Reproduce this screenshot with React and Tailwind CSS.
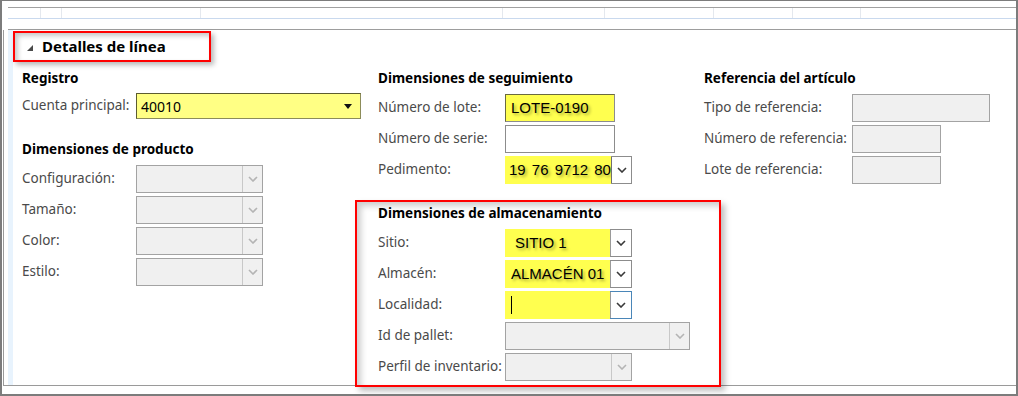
import React from "react";

const ui = "font-['Noto_Sans',sans-serif]";
const val = "font-['Liberation_Sans',Arial,sans-serif] text-[15px] text-black whitespace-nowrap [text-shadow:2px_2px_3px_rgba(0,0,0,0.35)]";

function Chevron({ dim }) {
  return (
    <svg width="10" height="6" viewBox="0 0 10 6" className="block">
      <polyline
        points="1,1 5,5 9,1"
        fill="none"
        stroke={dim ? "#b4b4b4" : "#3a3a3a"}
        strokeWidth="1.6"
      />
    </svg>
  );
}

// disabled gray combobox
function DimCombo({ w = "w-[127px]" }) {
  return (
    <div className={`${w} h-[28px] flex border border-[#a3a3a3] bg-[#f0f0f0]`}>
      <div className="flex-1" />
      <div className="w-[20px] border-l border-[#c8c8c8] flex items-center justify-center">
        <Chevron dim />
      </div>
    </div>
  );
}

function DimBox({ w }) {
  return <div className={`${w} h-[28px] border border-[#a3a3a3] bg-[#f0f0f0]`} />;
}

// yellow-marked combobox
function YellowCombo({ children, focused }) {
  return (
    <div
      className={`w-[127px] h-[28px] flex border ${
        focused ? "border-[#4a86b8]" : "border-[#8c8c8c]"
      } bg-white`}
    >
      <div className="w-[105px] -my-px -ml-px bg-[#ffff4f] flex items-center pl-[10px]">
        {children}
      </div>
      <div className="w-px bg-[#9a9a9a]" />
      <div className="flex-1 flex items-center justify-center">
        <Chevron />
      </div>
    </div>
  );
}

function Row({ label, lw, children }) {
  return (
    <div className="flex items-center h-[28px]">
      <div className={`${lw} shrink-0 text-[13.5px] text-[#4a4a4a] leading-none whitespace-nowrap`}>{label}</div>
      {children}
    </div>
  );
}

function Heading({ children }) {
  return (
    <div className="h-[20px] leading-[20px] text-[13.5px] font-bold text-black whitespace-nowrap">
      {children}
    </div>
  );
}

export default function App() {
  return (
    <div className={`w-[1018px] h-[396px] bg-white border-2 border-t-[1px] border-[#7c7c7c] flex flex-col overflow-hidden ${ui}`}>
      {/* grid header strip */}
      <div className="h-[29px] shrink-0 flex flex-col pl-[6px]">
        <div className="h-[6px]" />
        <div className="h-[1px] bg-[#a0a0a0]" />
        <div className="h-[10px] relative">
          {[40, 61, 200, 502, 604, 713, 792, 860].map((x) => (
            <div key={x} className="absolute top-0 bottom-0 w-px bg-[#e4e8ee]" style={{ left: x - 8 }} />
          ))}
        </div>
        <div className="h-[1px] bg-[#c9d9ee]" />
        <div className="h-[10px]" />
        <div className="h-[1px] bg-[#9d9d9d]" />
      </div>

      {/* line details panel */}
      <div className="flex-1 flex border-l border-b border-[#9a9a9a] ml-px mb-[8px] min-h-0">
        <div className="w-[4px]" />
        <div className="w-[5px] bg-[#e8f3fd]" />
        <div className="flex-1 flex flex-col min-w-0">
          <div className="mt-[1px] w-[198px] h-[31px] shrink-0 border-2 border-[#ff0000] flex items-center shadow-[3px_3px_5px_rgba(0,0,0,0.28),inset_3px_3px_5px_rgba(0,0,0,0.22)]">
            <svg width="6" height="6" viewBox="0 0 6 6" className="ml-[12px] mt-[3px]">
              <polygon points="6,0 6,6 0,6" fill="#4a4a4a" />
            </svg>
            <span className="ml-[9px] text-[15px] font-bold text-black leading-none">Detalles de línea</span>
          </div>

          <div className="flex mt-[6px] ml-[9px]">
            {/* left column */}
            <div className="w-[356px] shrink-0 flex flex-col">
              <Heading>Registro</Heading>
              <div className="mt-[5px] flex items-center h-[26px]">
                <div className="w-[114px] text-[13.5px] text-[#4a4a4a] leading-none whitespace-nowrap">Cuenta principal:</div>
                <div className="w-[225px] h-[26px] bg-[#ffff84] border border-[#8c8c5a] border-t-[#5c5c30] border-l-[#5c5c30] flex items-center pl-[4px] pr-[8px]">
                  <span className="flex-1 text-[14px] text-black">40010</span>
                  <svg width="8" height="5" viewBox="0 0 8 5">
                    <polygon points="0,0 8,0 4,5" fill="#111" />
                  </svg>
                </div>
              </div>
              <div className="mt-[20px]">
                <Heading>Dimensiones de producto</Heading>
              </div>
              <div className="mt-[6px] flex flex-col gap-[3px]">
                {["Configuración:", "Tamaño:", "Color:", "Estilo:"].map((l) => (
                  <Row key={l} label={l} lw="w-[114px]">
                    <DimCombo />
                  </Row>
                ))}
              </div>
            </div>

            {/* middle column */}
            <div className="w-[326px] shrink-0 flex flex-col">
              <Heading>Dimensiones de seguimiento</Heading>
              <div className="mt-[6px] flex flex-col gap-[3px]">
                <Row label="Número de lote:" lw="w-[127px]">
                  <div className="w-[110px] h-[28px] bg-[#ffff4f] border border-[#8c8c8c] border-t-[#6a6a40] border-l-[#6a6a40] flex items-center pl-[5px]">
                    <span className={val}>LOTE-0190</span>
                  </div>
                </Row>
                <Row label="Número de serie:" lw="w-[127px]">
                  <div className="w-[110px] h-[28px] bg-white border border-[#8c8c8c]" />
                </Row>
                <Row label="Pedimento:" lw="w-[127px]">
                  <div className="w-[127px] h-[28px] flex border border-[#8c8c8c] bg-white">
                    <div className="w-[106px] -my-px -ml-px bg-[#ffff4f] flex items-center pl-[4px] overflow-hidden">
                      <span className={`${val} [word-spacing:2px]`}>19 76 9712 80</span>
                    </div>
                    <div className="w-px bg-[#707070]" />
                    <div className="flex-1 flex items-center justify-center">
                      <Chevron />
                    </div>
                  </div>
                </Row>
              </div>

              <div className="mt-[16px] -ml-[23px] w-[366px] h-[187px] shrink-0 border-2 border-[#ff0000] pl-[21px] pt-[1px] shadow-[4px_4px_6px_rgba(0,0,0,0.25),inset_4px_4px_6px_rgba(0,0,0,0.2)]">
                <Heading>Dimensiones de almacenamiento</Heading>
                <div className="mt-[6px] flex flex-col gap-[3px]">
                  <Row label="Sitio:" lw="w-[127px]">
                    <YellowCombo>
                      <span className={val}>SITIO 1</span>
                    </YellowCombo>
                  </Row>
                  <Row label="Almacén:" lw="w-[127px]">
                    <YellowCombo>
                      <span className={`${val} -ml-[4px]`}>ALMACÉN 01</span>
                    </YellowCombo>
                  </Row>
                  <Row label="Localidad:" lw="w-[127px]">
                    <YellowCombo focused>
                      <span className="w-px h-[18px] bg-black -ml-[4px]" />
                    </YellowCombo>
                  </Row>
                  <Row label="Id de pallet:" lw="w-[127px]">
                    <DimCombo w="w-[185px]" />
                  </Row>
                  <Row label="Perfil de inventario:" lw="w-[127px]">
                    <DimCombo />
                  </Row>
                </div>
              </div>
            </div>

            {/* right column */}
            <div className="flex-1 flex flex-col">
              <Heading>Referencia del artículo</Heading>
              <div className="mt-[6px] flex flex-col gap-[3px]">
                <Row label="Tipo de referencia:" lw="w-[148px]">
                  <DimBox w="w-[138px]" />
                </Row>
                <Row label="Número de referencia:" lw="w-[148px]">
                  <DimBox w="w-[89px]" />
                </Row>
                <Row label="Lote de referencia:" lw="w-[148px]">
                  <DimBox w="w-[89px]" />
                </Row>
              </div>
            </div>
          </div>
        </div>
      </div>
    </div>
  );
}
